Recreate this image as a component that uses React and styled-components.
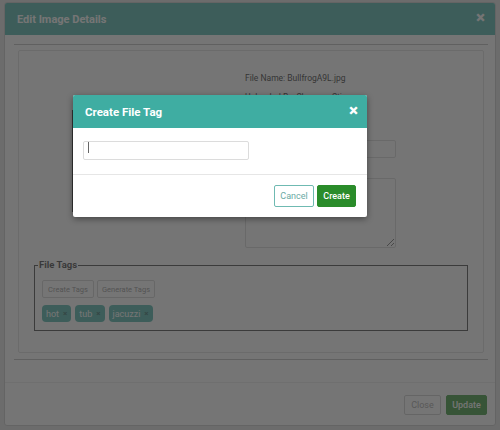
import React from 'react'
import styled, {createGlobalStyle} from 'styled-components'

const GlobalStyle = createGlobalStyle`
    * { box-sizing: border-box; }
    body {
        margin: 0;
        font-family: Roboto, "Noto Sans", Arial, sans-serif;
        background: #e0e0e0;
    }
`

const Page = styled.div`
    position: relative;
    width: 500px;
    height: 430px;
    padding: 2px 4px 4px 4px;
    overflow: hidden;
`

const Modal = styled.div`
    height: 424px;
    background: white;
    border: 1px solid #c4c4c4;
    border-radius: 3px;
    display: flex;
    flex-direction: column;
    overflow: hidden;
`

const Header = styled.div`
    height: ${props => props.small ? '33px' : '32px'};
    flex-shrink: 0;
    background: #3fada2;
    display: flex;
    align-items: center;
    justify-content: space-between;
    padding: 0 ${props => props.small ? '9px' : '10px'} 0 12px;
`

const Title = styled.h4`
    margin: 0;
    color: white;
    font-size: ${props => props.small ? '11.5px' : '11px'};
    font-weight: 700;
`

const CloseX = styled.span`
    color: white;
    font-size: 17px;
    font-weight: 900;
    line-height: 1;
    margin-top: -3px;
    cursor: pointer;
`

const Body = styled.div`
    flex: 1;
    padding: 9px 7px 0 9px;
    border-bottom: 1px solid #eaeaea;
`

const Rule = styled.div`
    border-top: 1px solid #b5b5b5;
`

const Card = styled.div`
    margin: 5px 4px 6px 4px;
    height: 303px;
    border: 1px solid #dcdcdc;
    border-radius: 2px;
    padding: 22px 15px 0 15px;
`

const TopRow = styled.div`
    display: grid;
    grid-template-columns: 211px 151px;
    height: 175px;
`

const Thumb = styled.div`
    margin: 37px 0 0 38px;
    width: 160px;
    height: 102px;
    border: 2px solid #222;
    background: #cfd8dc;
`

const Details = styled.div`
    display: flex;
    flex-direction: column;
`

const Info = styled.div`
    font-size: 8.5px;
    line-height: 10px;
    color: #222;
    margin-bottom: 9px;
    white-space: nowrap;
`

const Label = styled.label`
    font-size: 8px;
    line-height: 10px;
    color: #222;
    margin: ${props => props.first ? '15px' : '6px'} 0 4px 0;
`

const TextInput = styled.input`
    height: 18px;
    width: 100%;
    border: 1px solid #d6d6d6;
    border-radius: 2px;
    font-size: 8px;
    padding: 0 4px;
    outline: none;
`

const TextArea = styled.textarea`
    height: 70px;
    width: 100%;
    border: 1px solid #d6d6d6;
    border-radius: 2px;
    resize: vertical;
    font-family: inherit;
    font-size: 8px;
    outline: none;
`

const Fieldset = styled.fieldset`
    margin: 12px 0 0 0;
    border: 1px solid #3a3a3a;
    padding: 0 7px 8px 7px;
    min-width: 0;
`

const Legend = styled.legend`
    font-size: 9.5px;
    line-height: 10px;
    font-weight: 700;
    color: #333;
    padding: 0 1px;
    margin-left: -4px;
`

const ButtonRow = styled.div`
    display: flex;
    gap: ${props => props.gap || 3}px;
    margin-top: ${props => props.top || 0}px;
`

const SmallButton = styled.button`
    height: 18px;
    width: ${props => props.w}px;
    padding: 0;
    font-family: inherit;
    font-size: 7.5px;
    color: #8a8a8a;
    background: white;
    border: 1px solid #cfcfcf;
    border-radius: 2px;
`

const Chip = styled.span`
    display: inline-flex;
    align-items: center;
    gap: 4px;
    height: 17px;
    padding: 0 4px;
    border-radius: 4px;
    background: #3fada2;
    color: white;
    font-size: 9px;
`

const ChipX = styled.span`
    font-size: 8px;
    font-weight: 700;
    color: #1f5f58;
`

const Footer = styled.div`
    height: 42px;
    flex-shrink: 0;
    display: flex;
    justify-content: flex-end;
    align-items: flex-start;
    padding: 12px 8px 0 0;
    gap: 5px;
`

const ActionButton = styled.button`
    height: ${props => props.h || 20}px;
    width: ${props => props.w}px;
    font-family: inherit;
    font-size: 9px;
    font-weight: ${props => props.primary ? 500 : 400};
    border-radius: 2px;
    border: 1px solid ${props => props.primary ? '#2a8c2a' : props.teal ? '#6fbab2' : '#c9c9c9'};
    background: ${props => props.primary ? '#2a8c2a' : 'white'};
    color: ${props => props.primary ? 'white' : props.teal ? '#6aaaa4' : '#9a9a9a'};
    padding: 0;
`

const Backdrop = styled.div`
    position: absolute;
    inset: 0;
    background: rgba(60, 60, 60, 0.71);
`

const Dialog = styled.div`
    position: absolute;
    left: 73px;
    top: 95px;
    width: 294px;
    height: 122px;
    background: white;
    border-radius: 2px;
    box-shadow: 0 2px 6px rgba(0, 0, 0, 0.4);
    display: flex;
    flex-direction: column;
    overflow: hidden;
`

const DialogBody = styled.div`
    padding: 10px;
    height: 47px;
    border-bottom: 1px solid #e6e6e6;
`

const InputWrap = styled.div`
    position: relative;
    width: 166px;
`

const TagInput = styled.input`
    width: 166px;
    height: 19px;
    border: 1px solid #dcdcdc;
    border-radius: 2px;
    outline: none;
    font-size: 9px;
    padding: 0 5px;
`

const Caret = styled.span`
    position: absolute;
    left: 5px;
    top: 4px;
    width: 1px;
    height: 11px;
    background: #666;
`

const DialogFooter = styled.div`
    flex: 1;
    display: flex;
    justify-content: flex-end;
    align-items: flex-start;
    padding: 10px 11px 0 0;
    gap: 3px;
`

function App() {
    const tags = ['hot', 'tub', 'jacuzzi']

    return (
        <Page>
            <GlobalStyle />
            <Modal>
                <Header>
                    <Title>Edit Image Details</Title>
                    <CloseX>&times;</CloseX>
                </Header>
                <Body>
                    <Rule />
                    <Card>
                        <TopRow>
                            <Thumb />
                            <Details>
                                <Info>File Name: BullfrogA9L.jpg</Info>
                                <Info>Uploaded By: Shannon Stine</Info>
                                <Label first>Image Title</Label>
                                <TextInput />
                                <Label>Description</Label>
                                <TextArea />
                            </Details>
                        </TopRow>
                        <Fieldset>
                            <Legend>File Tags</Legend>
                            <ButtonRow top={10}>
                                <SmallButton w={52}>Create Tags</SmallButton>
                                <SmallButton w={58}>Generate Tags</SmallButton>
                            </ButtonRow>
                            <ButtonRow top={7} gap={4}>
                                {tags.map(tag => (
                                    <Chip key={tag}>{tag}<ChipX>&times;</ChipX></Chip>
                                ))}
                            </ButtonRow>
                        </Fieldset>
                    </Card>
                    <Rule />
                </Body>
                <Footer>
                    <ActionButton w={37}>Close</ActionButton>
                    <ActionButton w={41} primary>Update</ActionButton>
                </Footer>
            </Modal>
            <Backdrop />
            <Dialog>
                <Header small>
                    <Title small>Create File Tag</Title>
                    <CloseX>&times;</CloseX>
                </Header>
                <DialogBody>
                    <InputWrap>
                        <TagInput />
                        <Caret />
                    </InputWrap>
                </DialogBody>
                <DialogFooter>
                    <ActionButton w={40} h={22} teal>Cancel</ActionButton>
                    <ActionButton w={39} h={22} primary>Create</ActionButton>
                </DialogFooter>
            </Dialog>
        </Page>
    )
}

export default App
